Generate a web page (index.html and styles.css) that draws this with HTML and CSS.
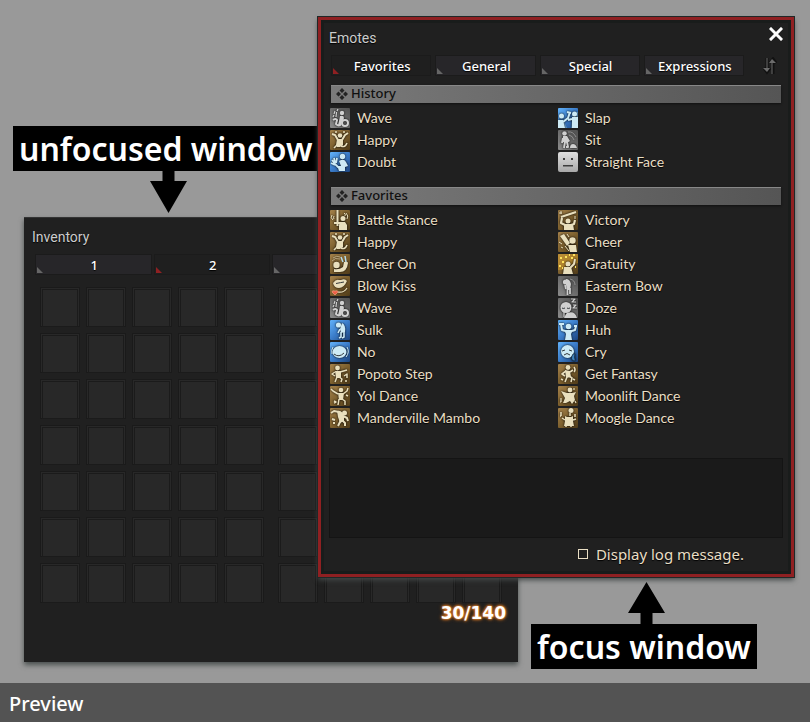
FILE: index.html
```html
<!DOCTYPE html>
<html lang="en">
<head>
<meta charset="utf-8">
<meta name="viewport" content="width=device-width, initial-scale=1">
<title>Preview</title>
<link rel="stylesheet" href="styles.css">
</head>
<body>
<svg class="sprite" aria-hidden="true">
  <defs>
    <linearGradient id="gray" x1="1" y1="0" x2="0" y2="1"><stop offset="0" stop-color="#505050"/><stop offset=".5" stop-color="#6c6c6c"/><stop offset="1" stop-color="#8d8d8d"/></linearGradient>
    <linearGradient id="brown" x1="0" y1="0" x2="1" y2="1"><stop offset="0" stop-color="#a5824b"/><stop offset=".5" stop-color="#7d602e"/><stop offset="1" stop-color="#4e3a18"/></linearGradient>
    <linearGradient id="blue" x1="0" y1="0" x2="1" y2="1"><stop offset="0" stop-color="#62b2fa"/><stop offset=".5" stop-color="#3b7cc9"/><stop offset="1" stop-color="#1d457f"/></linearGradient>
    <linearGradient id="silver" x1="0" y1="0" x2="0" y2="1"><stop offset="0" stop-color="#dedede"/><stop offset="1" stop-color="#a9a9a9"/></linearGradient>
  </defs>
  <symbol id="wave" viewBox="0 0 20 20">
    <rect width="20" height="20" rx="1" fill="url(#gray)"/>
    <g class="ink gray">
      <path class="line" d="M6 9 6.500 4M4 6l1-3M7 3l1-2M3 9l1-2" stroke-width="1.200"/>
      <path class="line" d="M3 12q3-2 4 0l-1 4q3 3 5 0" stroke-width="2"/>
      <circle cx="12" cy="5" r="2.200"/><path d="M10 8q4-1 4 2l-1 3-3 5-2-1 1-4z"/>
      <circle class="line" cx="15" cy="15" r="3" stroke-width="2"/>
    </g>
  </symbol>
  <symbol id="happy" viewBox="0 0 20 20">
    <rect width="20" height="20" rx="1" fill="url(#brown)"/>
    <g class="ink cream">
      <path class="line" d="M2 4 5 5 8 10M18 3l-3 2-3 5" stroke-width="2"/>
      <circle cx="10" cy="5.500" r="2.300"/><path d="M7 9h6l0 6-3 2H7l-1-2z"/>
      <path class="line" d="M7 15l-3 3M11 16q4 2 6-3M5 2l2 0M13 2h2" stroke-width="1.600"/>
    </g>
  </symbol>
  <symbol id="doubt" viewBox="0 0 20 20">
    <rect width="20" height="20" rx="1" fill="url(#blue)"/>
    <g class="ink ice"><circle cx="12.500" cy="4.500" r="2.700"/><path d="M9 9q5-3 7 1l2 4-3 1v4H9l-1-3 3-2z"/><path class="line" d="M2 8l3 4 3 3 4 0M4 6l1 5M7 6l-1 5M1 11l4 2" stroke-width="1.800"/></g>
  </symbol>
  <symbol id="slap" viewBox="0 0 20 20">
    <rect width="20" height="20" rx="1" fill="url(#blue)"/><path fill="#99d4ee" d="M0 15l6-2 3 7H0zM15 4h5v16h-7z" opacity=".5"/>
    <g class="ink ice"><circle cx="3.500" cy="8" r="2.500"/><circle cx="16.500" cy="6" r="2.500"/><path d="M0 12h5l2 8H0zM14 9h6v11h-6z"/><path class="line" d="M5 14l5-4 2-6M14 11l-4 1M9 4l4 1" stroke-width="2"/></g>
  </symbol>
  <symbol id="sit" viewBox="0 0 20 20">
    <rect width="20" height="20" rx="1" fill="url(#gray)"/>
    <g class="ink gray"><circle cx="6.500" cy="3.500" r="2.300"/><path d="M5 6h4l3 5-3 2-4-1z"/><path class="line" d="M5 8l-1 5M7 12l-1 6M9 12l1 5H8" stroke-width="2"/><path d="M12 18q0-4 3-4t4 4z"/><path class="line" d="M10 2q5-1 8 5M11 5q4 1 5 5" stroke-width=".8" opacity=".6"/></g>
  </symbol>
  <symbol id="straight-face" viewBox="0 0 20 20">
    <rect width="20" height="20" rx="2" fill="url(#silver)"/><path d="M5 6h2v2H5zM13 6h2v2h-2zM5 13h10v1.500H5z" fill="#3d3d3d"/>
  </symbol>
  <symbol id="battle-stance" viewBox="0 0 20 20">
    <rect width="20" height="20" rx="1" fill="url(#brown)"/>
    <g class="ink cream"><path class="line" d="M7.500 0v13M4 13h6M7.500 13v3" stroke-width="2"/><circle cx="13" cy="8.500" r="2.500"/><path d="M10 12h5l2 3v5H9v-5z"/><path class="line" d="M2 5q-2 3 1 5M4 6q-1 2 0 3M16 3q3 3 1 6M14 3q2 1 1 3" stroke-width="1"/></g>
  </symbol>
  <symbol id="cheer-on" viewBox="0 0 20 20">
    <rect width="20" height="20" rx="1" fill="url(#brown)"/>
    <g class="ink cream"><circle cx="6.500" cy="11" r="3.200"/><path d="M4 15q5 1 9-2l1-5q4-1 4 1-1 9-8 9H4z"/><path class="line" d="M2 7q3-4 8-2M3 4q4-3 7-1" stroke-width=".8" opacity=".7"/></g>
    <path d="M11 3l2 5M15 2l1 6" stroke="#b4dced" stroke-width="1.500" fill="none"/>
  </symbol>
  <symbol id="blow-kiss" viewBox="0 0 20 20">
    <rect width="20" height="20" rx="1" fill="url(#brown)"/>
    <g class="ink cream"><path d="M3 7q3-4 6-3l2 0q4-2 6 1-3 7-8 7T3 7z"/><path class="cut" d="M6 7.500q5-1 8-1.500"/><path class="line" d="M8 16q6 1 9-4" stroke-width="1.200"/></g>
    <path d="M5 19 2 16q0-2 3-1 3-1 3 1z" fill="#ee6048" stroke="#f5a58a" stroke-width=".6"/>
  </symbol>
  <symbol id="sulk" viewBox="0 0 20 20">
    <rect width="20" height="20" rx="1" fill="url(#blue)"/>
    <g class="ink ice"><circle cx="8.500" cy="5" r="2.600"/><path d="M12 3q4 2 3 9l-4 1-1-4z"/><path class="line" d="M11 12l0 5-2 1M14 12l0 5-2 1M10 9l-2 4" stroke-width="1.600"/></g>
  </symbol>
  <symbol id="no" viewBox="0 0 20 20">
    <rect width="20" height="20" rx="1" fill="url(#blue)"/>
    <g class="ink ice"><ellipse cx="9.500" cy="10" rx="7" ry="6"/><path class="cut" d="M4 12q5 4 10-1"/><path class="line" d="M17 5q3 5-1 10M3 5q-2 3-1 7" stroke-width="1"/></g>
  </symbol>
  <symbol id="popoto-step" viewBox="0 0 20 20">
    <rect width="20" height="20" rx="1" fill="url(#brown)"/>
    <g class="ink cream"><circle cx="7.500" cy="4" r="2.400"/><path d="M5 7h6v7H6z"/><path class="line" d="M10 8l7-2M5 8l-3 2 3 2M7 13l-2 5M9 13l3 2-1 3M14 12l3-2v4M15 17h2" stroke-width="1.500"/></g>
  </symbol>
  <symbol id="yol-dance" viewBox="0 0 20 20">
    <rect width="20" height="20" rx="1" fill="url(#brown)"/>
    <g class="ink cream"><circle cx="11" cy="4" r="2.300"/><path d="M8 7h6l-1 7H9z"/><path class="line" d="M8 8L3 5 1 3M13 8l4-3 1-3M9 13l-1 6M12 13l3 2v4M4 15l2 1-2 1M16 9l2 1" stroke-width="1.500"/></g>
  </symbol>
  <symbol id="manderville-mambo" viewBox="0 0 20 20">
    <rect width="20" height="20" rx="1" fill="url(#brown)"/>
    <g class="ink cream"><circle cx="14.500" cy="5" r="2.500"/><path d="M7 3q5-1 7 5l0 5-4 2-2-6z"/><path class="line" d="M9 4L4 3 1 5M13 8l4 2 1 3M11 12l-3 6M12 12l3 3v3M2 11l3 1M4 14v2" stroke-width="2"/></g>
  </symbol>
  <symbol id="victory" viewBox="0 0 20 20">
    <rect width="20" height="20" rx="1" fill="url(#brown)"/>
    <g class="ink cream"><path class="line" d="M3 7 18 2M4 8l-1 5 4 2M17 10l-1 4-3 1" stroke-width="2.200"/><circle cx="10" cy="11" r="2.500"/><path d="M6 14h9l1 6H6z"/><path class="line" d="M17 6v3M3 1v3M1 3h3" stroke-width="1"/></g>
  </symbol>
  <symbol id="cheer" viewBox="0 0 20 20">
    <rect width="20" height="20" rx="1" fill="url(#brown)"/>
    <g class="ink cream"><path d="M2 4l4-2 6 9-3 3z"/><circle cx="14.500" cy="8.500" r="3.200"/><path d="M10 13h8l1 7h-7z"/><path class="line" d="M7 14l4 5M9 2l2 3M1 10l3 2M3 15l2 1" stroke-width="1"/></g>
  </symbol>
  <symbol id="gratuity" viewBox="0 0 20 20">
    <rect width="20" height="20" rx="1" fill="url(#brown)"/><path d="M0 0h20v9l-8 2-8 5-4 0z" fill="#d19b28" opacity=".55"/>
    <g class="ink cream"><circle cx="10" cy="10" r="2.500"/><path d="M6 13h7l2 7H5z"/><path class="line" d="M12 14l4-4 1-5" stroke-width="2"/></g>
    <path d="M2 4h2M7 3h2M13 4h2M4 8h2M1 12h2M15 1h2M4 14h1M11 1h1M17 13h1" stroke="#ffe45e" stroke-width="2"/>
  </symbol>
  <symbol id="eastern-bow" viewBox="0 0 20 20">
    <rect width="20" height="20" rx="1" fill="url(#gray)"/>
    <g class="ink gray"><circle cx="7.500" cy="6" r="2.600"/><path d="M8 3q4 0 5 5l-1 6-3 0-1-5z"/><path class="line" d="M9.500 13v6M12 12v6M7 9l1 4" stroke-width="1.800"/><path class="line" d="M12 3q5 1 5 6" stroke-width=".8" opacity=".6"/></g>
  </symbol>
  <symbol id="doze" viewBox="0 0 20 20">
    <rect width="20" height="20" rx="1" fill="url(#gray)"/>
    <g class="ink gray"><circle cx="8" cy="9.500" r="5.500"/><path d="M9 15q8-3 10 5H6l2-4z"/><path class="cut" d="M4 10q1 1 3 0M9 10q1 1 3 0"/><path class="line" d="M13 1h4l-3 3h4M15 7h3l-3 3h4M6 14v5" stroke-width="1.200"/></g>
  </symbol>
  <symbol id="huh" viewBox="0 0 20 20">
    <rect width="20" height="20" rx="1" fill="url(#blue)"/>
    <g class="ink ice"><circle cx="10.500" cy="6.500" r="2.800"/><path d="M6 10h9l-2 4 1 6H7l1-6z"/><path class="line" d="M7 11 4 10 3 4M14 11l3-1 1-4M1 4h5M16 6h3" stroke-width="2"/></g>
  </symbol>
  <symbol id="cry" viewBox="0 0 20 20">
    <rect width="20" height="20" rx="1" fill="url(#blue)"/>
    <g class="ink ice"><circle cx="9.500" cy="9.500" r="6.500"/><path class="cut" d="M4 9l3-1M11 8l3 1M6 13q3-3 6 0"/><path d="M15 12q-3 5 0 6.500t2-1 0-5.500z" fill="#3f82bb" stroke="#15304b" stroke-width=".8"/></g>
  </symbol>
  <symbol id="get-fantasy" viewBox="0 0 20 20">
    <rect width="20" height="20" rx="1" fill="url(#brown)"/>
    <g class="ink cream"><circle cx="10" cy="3.500" r="2.400"/><path d="M7 6l5 1 1 6-5 1z"/><path class="line" d="M8 7l-4 3 3 2M12 8l3-2M9 13l-2 5M11 12l3 2-1 4M16 3q2 3 0 5M15 15l2 1M3 15l2 1" stroke-width="1.600"/></g>
  </symbol>
  <symbol id="moonlift-dance" viewBox="0 0 20 20">
    <rect width="20" height="20" rx="1" fill="url(#brown)"/>
    <g class="ink cream"><circle cx="12" cy="4" r="2.400"/><path d="M3 5l6 2 5 0 4-1-2 4 1 4-3 4-2-3-4 2-3 0 2-5z"/><path class="line" d="M3 12v4M2 16h1M17 15l1 2M16 2v2" stroke-width="1.200"/></g>
  </symbol>
  <symbol id="moogle-dance" viewBox="0 0 20 20">
    <rect width="20" height="20" rx="1" fill="url(#brown)"/>
    <g class="ink cream"><circle cx="13" cy="2.500" r="2.500"/><path d="M7 8l2 1h4l2-1v5l1 5H6l1-5z"/><path class="line" d="M7 12l-3-2M15 12l3-1M8 17v2M13 17v2M3 4v4M2 8h1M17 6v3M12 5v3" stroke-width="1.500"/></g>
  </symbol>
  <symbol id="diamonds" viewBox="0 0 12 12">
    <path d="M6 0l2.500 2.500L6 5 3.500 2.500zM2.500 3.500 5 6 2.500 8.500 0 6zM9.500 3.500 12 6 9.500 8.500 7 6zM6 7l2.500 2.500L6 12 3.500 9.500z" fill="#222"/>
  </symbol>
</svg>

<main class="desktop">
  <section class="window inventory" aria-label="Inventory">
    <h2 class="title">Inventory</h2>
    <div class="tabs inventory-tabs">
      <button class="tab">1</button>
      <button class="tab active">2</button>
      <button class="tab">3</button>
      <button class="tab">4</button>
    </div>
    <div class="bags">
      <div class="bag"></div>
      <div class="bag"></div>
    </div>
    <p class="count">30/140</p>
  </section>

  <div class="callout unfocused">
    <p class="caption">unfocused window</p>
    <svg class="arrow" viewBox="0 0 37 42" aria-hidden="true"><path d="M12.500 0h12v10H37L18.500 42 0 10h12.500z"/></svg>
  </div>

  <section class="window emotes" aria-label="Emotes">
    <header class="bar">
      <h2 class="title">Emotes</h2>
      <button class="close" aria-label="Close"><svg viewBox="0 0 14 14"><path d="M2 2l10 10M12 2 2 12" stroke="#fff" stroke-width="3" stroke-linecap="square"/></svg></button>
    </header>
    <div class="toolbar">
      <div class="tabs emote-tabs">
        <button class="tab active">Favorites</button>
        <button class="tab">General</button>
        <button class="tab">Special</button>
        <button class="tab">Expressions</button>
      </div>
      <button class="sort" aria-label="Sort"><svg viewBox="0 0 14 18"><path d="M4 1v14M1 11l3 4 3-4M10 17V3M7 6l3-4 3 4" fill="none" stroke="#111" stroke-width="3"/><path d="M4 1v13M9 17V4" stroke="#6c6c6c" stroke-width="1"/><path d="M0 11h7l-3 4zM6 6h7l-4-4z" fill="#6c6c6c"/></svg></button>
    </div>

    <h3 class="heading"><svg><use href="#diamonds"/></svg>History</h3>
    <ul class="list history">
      <li><svg><use href="#wave"/></svg>Wave</li>
      <li><svg><use href="#slap"/></svg>Slap</li>
      <li><svg><use href="#happy"/></svg>Happy</li>
      <li><svg><use href="#sit"/></svg>Sit</li>
      <li><svg><use href="#doubt"/></svg>Doubt</li>
      <li><svg><use href="#straight-face"/></svg>Straight Face</li>
    </ul>

    <h3 class="heading"><svg><use href="#diamonds"/></svg>Favorites</h3>
    <ul class="list favorites">
      <li><svg><use href="#battle-stance"/></svg>Battle Stance</li>
      <li><svg><use href="#victory"/></svg>Victory</li>
      <li><svg><use href="#happy"/></svg>Happy</li>
      <li><svg><use href="#cheer"/></svg>Cheer</li>
      <li><svg><use href="#cheer-on"/></svg>Cheer On</li>
      <li><svg><use href="#gratuity"/></svg>Gratuity</li>
      <li><svg><use href="#blow-kiss"/></svg>Blow Kiss</li>
      <li><svg><use href="#eastern-bow"/></svg>Eastern Bow</li>
      <li><svg><use href="#wave"/></svg>Wave</li>
      <li><svg><use href="#doze"/></svg>Doze</li>
      <li><svg><use href="#sulk"/></svg>Sulk</li>
      <li><svg><use href="#huh"/></svg>Huh</li>
      <li><svg><use href="#no"/></svg>No</li>
      <li><svg><use href="#cry"/></svg>Cry</li>
      <li><svg><use href="#popoto-step"/></svg>Popoto Step</li>
      <li><svg><use href="#get-fantasy"/></svg>Get Fantasy</li>
      <li><svg><use href="#yol-dance"/></svg>Yol Dance</li>
      <li><svg><use href="#moonlift-dance"/></svg>Moonlift Dance</li>
      <li><svg><use href="#manderville-mambo"/></svg>Manderville Mambo</li>
      <li><svg><use href="#moogle-dance"/></svg>Moogle Dance</li>
    </ul>

    <div class="details"></div>
    <div class="option">
      <input type="checkbox" id="log-message">
      <label for="log-message">Display log message.</label>
    </div>
  </section>

  <div class="callout focused">
    <svg class="arrow" viewBox="0 0 37 42" aria-hidden="true"><path d="M18.500 0 37 31H24.500v11h-12V31H0z"/></svg>
    <p class="caption">focus window</p>
  </div>
</main>
<footer class="footer">Preview</footer>
<script src="app.js"></script>
</body>
</html>
```
FILE: styles.css
```css
* { box-sizing: border-box; }

body {
  margin: 0;
  min-height: 100vh;
  display: flex;
  flex-direction: column;
  background: #999;
  color: #fff;
  font-family: "Noto Sans", "Open Sans", sans-serif;
}

h2, h3, p, ul { margin: 0; padding: 0; }
ul { list-style: none; }
button { border: 0; padding: 0; background: none; font: inherit; color: inherit; }
svg { display: block; flex: none; }

.sprite { position: absolute; width: 0; height: 0; }
.desktop { position: relative; flex: 1; min-height: 683px; }

.footer {
  padding: 2px 9px 0;
  background: #535353;
  font-size: 20px;
  font-weight: 500;
  line-height: 37px;
}

/* Windows */
.window { position: absolute; background: #202020; }

.inventory {
  left: 24px;
  top: 217px;
  width: 494px;
  padding: 4px 11px 40px;
  border-top: 1px solid #343434;
  box-shadow: 0 3px 5px #4a504f;
}

.emotes {
  left: 318px;
  top: 17px;
  width: 476px;
  padding: 3px 8px 10px;
  border: 3px solid #8f2022;
  box-shadow: 0 0 0 1px #202827, 0 3px 5px #444a49, inset 0 0 0 3px #191c1b;
}

.title {
  color: #ccc;
  font-family: Roboto, "Liberation Sans", sans-serif;
  font-size: 14px;
  font-weight: 400;
  line-height: 30px;
  text-shadow: 0 1px 1px #000;
}
.inventory .title { margin-left: -3px; }

.bar { display: flex; justify-content: space-between; }
.close { width: 14px; height: 14px; margin-top: 4px; }

.tabs { display: grid; grid-template-columns: repeat(4, 1fr); }
.tab {
  position: relative;
  height: 21px;
  padding: 1px 0 0 2px;
  background: #272629;
  border: 1px solid #1b1b1b;
  font-size: 13px;
  font-weight: 500;
  line-height: 18px;
  text-shadow: 0 1px 1px #000;
}
.tab.active { background: #1f1f1f; }
.tab::after {
  content: "";
  position: absolute;
  left: 1px;
  bottom: 1px;
  border: 3px solid transparent;
  border-left-color: #666;
  border-bottom-color: #666;
}
.tab.active::after { border-left-color: #8f2022; border-bottom-color: #8f2022; }

.toolbar { display: flex; justify-content: space-between; margin: 2px 6px 9px 2px; }
.emote-tabs { flex: 1; max-width: 413px; gap: 4px; }
.sort { width: 14px; height: 18px; margin-top: 2px; }

/* Inventory contents */
.inventory-tabs { gap: 2px; margin-top: 2px; }
.bags { display: flex; gap: 14px; padding: 12px 5px 0; }
.bag { display: grid; grid-template-columns: repeat(5, 40px); gap: 6px; }
.slot {
  height: 40px;
  padding: 1px;
  background: #282828;
  border: 1px solid #1a1a1a;
}
.slot::before {
  content: "";
  display: block;
  height: 100%;
  border: 1px solid #1b1b1b;
}
.count {
  padding: 1px 1px 0 0;
  color: #fff;
  font-family: "DejaVu Sans", sans-serif;
  font-size: 17px;
  font-weight: 700;
  line-height: 18px;
  text-align: right;
  text-shadow: 0 0 2px #f08a30, 0 0 3px #f08a30, 0 0 4px #c86414;
}

/* Emote contents */
.heading {
  display: flex;
  align-items: center;
  gap: 3px;
  height: 18px;
  margin: 0 2px;
  padding: 0 0 2px 5px;
  background: linear-gradient(90deg, #7a7a7a, #555);
  border-top: 1px solid #888;
  box-shadow: 0 1px 2px #111;
  color: #101010;
  font-size: 13px;
  font-weight: 500;
  line-height: 15px;
}
.heading svg { width: 12px; height: 12px; }

.list {
  display: grid;
  grid-template-columns: 1fr 1fr;
  grid-auto-rows: 22px;
  column-gap: 3px;
  padding: 4px 0 0 1px;
}
.history { margin-bottom: 14px; }
.favorites { margin-bottom: 29px; }
.list li {
  display: flex;
  align-items: center;
  gap: 7px;
  color: #eadfc5;
  font-family: Lato, "Noto Sans", sans-serif;
  font-size: 14px;
  line-height: 20px;
  text-shadow: 0 1px 1px #000;
}
.list svg { width: 20px; height: 20px; }

.ink { filter: drop-shadow(0 0 1px #000); }
.gray { fill: #d0d0d0; stroke: #d0d0d0; stroke-width: 0; }
.cream { fill: #e9dfbd; stroke: #e9dfbd; stroke-width: 0; }
.ice { fill: #cdeaf5; stroke: #cdeaf5; stroke-width: 0; }
.line { fill: none; stroke-linejoin: round; }
.cut { fill: none; stroke: #33383b; stroke-width: 1; }

.details { height: 80px; background: #1a1a1a; border: 1px solid #141414; }
.option {
  display: flex;
  align-items: center;
  justify-content: flex-end;
  gap: 8px;
  padding: 6px 39px 0 0;
  color: #eadfc5;
  font-size: 15px;
  line-height: 20px;
  text-shadow: 0 1px 1px #000;
}
.option input {
  appearance: none;
  width: 10px;
  height: 10px;
  margin: 0;
  border: 1px solid #eadfc5;
}

/* Callouts over the desktop */
.callout { position: absolute; display: flex; flex-direction: column; align-items: center; }
.unfocused { left: 13px; top: 126px; }
.focused { left: 531px; top: 582px; }
.caption {
  padding: 0 6px;
  background: #000;
  font-size: 32px;
  font-weight: 600;
  line-height: 45px;
  white-space: nowrap;
}
.arrow { width: 37px; height: 42px; margin-left: 6px; }
```
FILE: app.js
```js
// Each bag holds seven rows of five slots.
document.querySelectorAll(".bag").forEach((bag) => {
  for (let i = 0; i < 35; i += 1) {
    const slot = document.createElement("div");
    slot.className = "slot";
    bag.append(slot);
  }
});
```
